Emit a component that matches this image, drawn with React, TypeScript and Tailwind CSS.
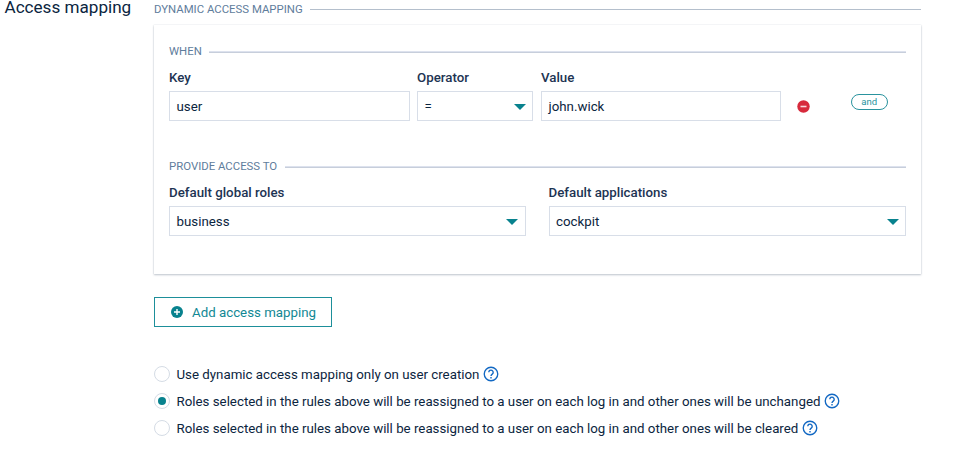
import React from "react";

function Legend({ children, thick = false }: { children: React.ReactNode; thick?: boolean }) {
  return (
    <div className="flex h-4 items-center gap-[7.5px] text-[11.38px] leading-4 text-[#5f7d9c]">
      <span className="whitespace-nowrap">{children}</span>
      {thick ? (
        <span className="mt-[2px] h-[2px] flex-1 border-t border-[#dde2ee] bg-[#c7cedb]" />
      ) : (
        <span className="mt-px h-px flex-1 bg-[#b4bfcc]" />
      )}
    </div>
  );
}

function Caret() {
  return (
    <svg width="12" height="6" viewBox="0 0 12 6" className="mt-px shrink-0">
      <path d="M0 0h12L6 6z" fill="#08828e" />
    </svg>
  );
}

function Field({ label, value, width, select = false }: { label: string; value: string; width: string; select?: boolean }) {
  return (
    <div className={width}>
      <div className="h-5 text-[13.3px] leading-5 font-medium whitespace-nowrap text-[#1d3453]">{label}</div>
      <div className="mt-[3px] flex h-[30px] items-center justify-between border border-[#d8dee8] pr-[6.5px] pl-[6.5px] text-[13.3px] text-[#0b2540]">
        <span className="pt-[2px]">{value}</span>
        {select && <Caret />}
      </div>
    </div>
  );
}

function Help() {
  return (
    <svg width="16" height="16" viewBox="0 0 16 16" fill="none" className="mb-px ml-[3px] shrink-0">
      <circle cx="8" cy="8" r="6.75" stroke="#1268c3" strokeWidth="1.35" />
      <path d="M5.8 6.3a2.2 2.2 0 1 1 3.6 1.7C8.5 8.7 8 9 8 10" stroke="#1268c3" strokeWidth="1.35" />
      <path d="M7.3 11h1.4v1.4H7.3z" fill="#1268c3" />
    </svg>
  );
}

function Option({ text, width, checked = false }: { text: string; width: string; checked?: boolean }) {
  return (
    <div className="flex h-[27px] items-center text-[13.3px] text-[#0b2540]">
      <span className="mr-[7px] mb-px flex size-[15.5px] shrink-0 items-center justify-center rounded-full border border-[#d5dce5]">
        {checked && <span className="size-2 rounded-full bg-[#08828e]" />}
      </span>
      <span className={`whitespace-nowrap ${width}`}>{text}</span>
      <Help />
    </div>
  );
}

export default function App() {
  return (
    <div className="flex h-[452px] w-[954px] overflow-hidden bg-white font-[Roboto,sans-serif]">
      <h2 className="h-[14px] w-[154px] shrink-0 pl-[4.5px] text-[17.1px] leading-[14px] whitespace-nowrap text-[#0b2540]">Access mapping</h2>
      <main className="w-[767px]">
        <div className="pt-px">
          <Legend>DYNAMIC ACCESS MAPPING</Legend>
        </div>
        <section className="mt-2 h-[249px] px-[15px] pt-[18px] shadow-[0_1px_2px_rgba(50,70,95,0.3),0_0_1px_rgba(50,70,95,0.2)]">
          <Legend thick>WHEN</Legend>
          <div className="mt-[9px] flex">
            <Field label="Key" value="user" width="w-[241px]" />
            <div className="w-[7px]" />
            <Field label="Operator" value="=" width="w-[116px]" select />
            <div className="w-2" />
            <Field label="Value" value="john.wick" width="w-[240px]" />
            <svg width="13" height="13" viewBox="0 0 13 13" className="mt-[31.5px] ml-4 shrink-0">
              <circle cx="6.5" cy="6.5" r="6.2" fill="#d72a3c" />
              <path d="M3.5 6.5h6" stroke="#f8d8dc" strokeWidth="1.6" />
            </svg>
            <span className="mt-[26px] ml-[40.5px] flex h-4 w-[37.5px] items-center justify-center rounded-full border border-[#2a939e] text-[9.6px] text-[#2a939e]">and</span>
          </div>
          <div className="mt-[37px]">
            <Legend thick>PROVIDE ACCESS TO</Legend>
          </div>
          <div className="mt-[9px] flex justify-between">
            <Field label="Default global roles" value="business" width="w-[356.5px]" select />
            <Field label="Default applications" value="cockpit" width="w-[357.5px]" select />
          </div>
        </section>
        <button className="mt-[23px] flex h-[30px] w-[178px] items-center border border-[#1d8f9a] pl-4 text-[13.3px] text-[#118894]">
          <svg width="12" height="12" viewBox="0 0 12 12" className="mr-[9px] shrink-0">
            <circle cx="6" cy="6" r="6" fill="#08828e" />
            <path d="M3 6h6M6 3v6" stroke="#fff" strokeWidth="1.4" />
          </svg>
          <span className="mt-px whitespace-nowrap">Add access mapping</span>
        </button>
        <div className="mt-[34px]">
          <Option text="Use dynamic access mapping only on user creation" width="w-[303px]" />
          <Option text="Roles selected in the rules above will be reassigned to a user on each log in and other ones will be unchanged" width="w-[644px]" checked />
          <Option text="Roles selected in the rules above will be reassigned to a user on each log in and other ones will be cleared" width="w-[622px]" />
        </div>
      </main>
    </div>
  );
}
